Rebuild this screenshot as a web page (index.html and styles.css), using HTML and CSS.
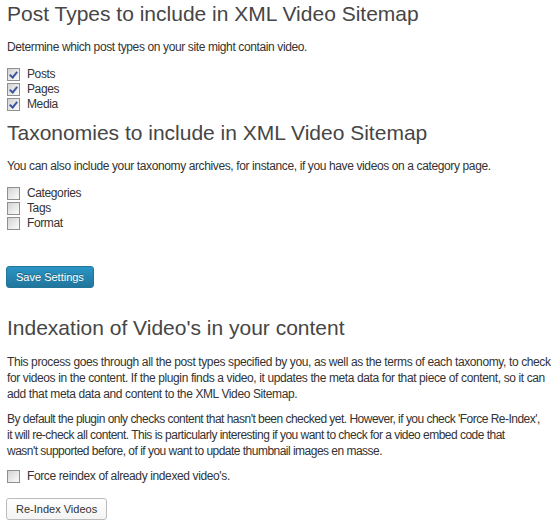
FILE: index.html
```html
<!DOCTYPE html>
<html lang="en">
<head>
    <meta charset="UTF-8">
    <title>Video Sitemap Settings</title>
    <link rel="stylesheet" href="styles.css">
</head>
<body>
    <div class="wrap">
        <h2>Post Types to include in XML Video Sitemap</h2>
        <p class="intro">Determine which post types on your site might contain video.</p>
        <div class="checks">
            <label class="check"><span class="box on"></span>Posts</label>
            <label class="check"><span class="box on"></span>Pages</label>
            <label class="check"><span class="box on"></span>Media</label>
        </div>

        <h2 class="tax-title">Taxonomies to include in XML Video Sitemap</h2>
        <p class="intro">You can also include your taxonomy archives, for instance, if you have videos on a category page.</p>
        <div class="checks">
            <label class="check"><span class="box"></span>Categories</label>
            <label class="check"><span class="box"></span>Tags</label>
            <label class="check"><span class="box"></span>Format</label>
        </div>

        <div class="submit">
            <button class="button primary">Save Settings</button>
        </div>

        <h2 class="index-title">Indexation of Video's in your content</h2>
        <p class="desc">This process goes through all the post types specified by you, as well as the terms of each taxonomy, to check for videos in the content. If the plugin finds a video, it updates the meta data for that piece of content, so it can add that meta data and content to the XML Video Sitemap.</p>
        <p class="desc second">By default the plugin only checks content that hasn't been checked yet. However, if you check 'Force Re-Index',<br>
            it will re-check all content. This is particularly interesting if you want to check for a video embed code that<br>
            wasn't supported before, of if you want to update thumbnail images en masse.</p>
        <div class="checks single">
            <label class="check"><span class="box"></span>Force reindex of already indexed video's.</label>
        </div>
        <button class="button secondary">Re-Index Videos</button>
    </div>
</body>
</html>
```

FILE: styles.css
```css
body {
    margin: 0;
    padding: 0;
    background-color: #fff;
    color: #333;
    font-family: "Liberation Sans", Arial, sans-serif;
    font-size: 12px;
    letter-spacing: -0.38px;
}
.wrap {
    padding: 1px 0 0 7px;
}
h2 {
    margin: 0;
    font-size: 21px;
    font-weight: normal;
    line-height: 26px;
    letter-spacing: 0;
    color: #464646;
}
p {
    margin: 0;
    line-height: 16px;
}
.intro {
    margin-top: 12px;
}
.checks {
    margin-top: 12px;
    display: flex;
    flex-direction: column;
}
.check {
    display: flex;
    align-items: center;
    height: 15px;
    line-height: 15px;
}
/* classic grey checkbox with a blue tick */
.box {
    width: 11px;
    height: 11px;
    margin-right: 7px;
    border: 1px solid #8e8f8f;
    background: linear-gradient(135deg, #d2d2d2 0%, #ececec 60%, #fbfbfb 100%);
    position: relative;
}
.box.on::after {
    content: "";
    position: absolute;
    left: 3px;
    top: 1px;
    width: 3px;
    height: 6px;
    border: solid #3f55a0;
    border-width: 0 2px 2px 0;
    transform: rotate(40deg);
}
.tax-title {
    margin-top: 8px;
}
.submit {
    margin-top: 35px;
}
.button {
    display: block;
    font-family: "Liberation Sans", Arial, sans-serif;
    font-size: 11px;
    letter-spacing: 0;
    height: 22px;
    padding: 0 9px;
    border-radius: 3px;
    cursor: pointer;
}
.primary {
    margin-left: -1px;
    color: #fff;
    background: linear-gradient(to bottom, #2a95c5, #21759b);
    border: 1px solid #21759b;
    text-shadow: 0 -1px 0 rgba(0, 0, 0, 0.3);
}
.secondary {
    margin: 14px 0 0 -1px;
    color: #333;
    background: linear-gradient(to bottom, #fefefe, #f4f4f4);
    border: 1px solid #bbb;
}
.index-title {
    margin-top: 27px;
}
.desc {
    margin-top: 13px;
}
.desc.second {
    margin-top: 9px;
    letter-spacing: -0.52px;
    white-space: nowrap;
}
.checks.single {
    margin-top: 10px;
}
```
